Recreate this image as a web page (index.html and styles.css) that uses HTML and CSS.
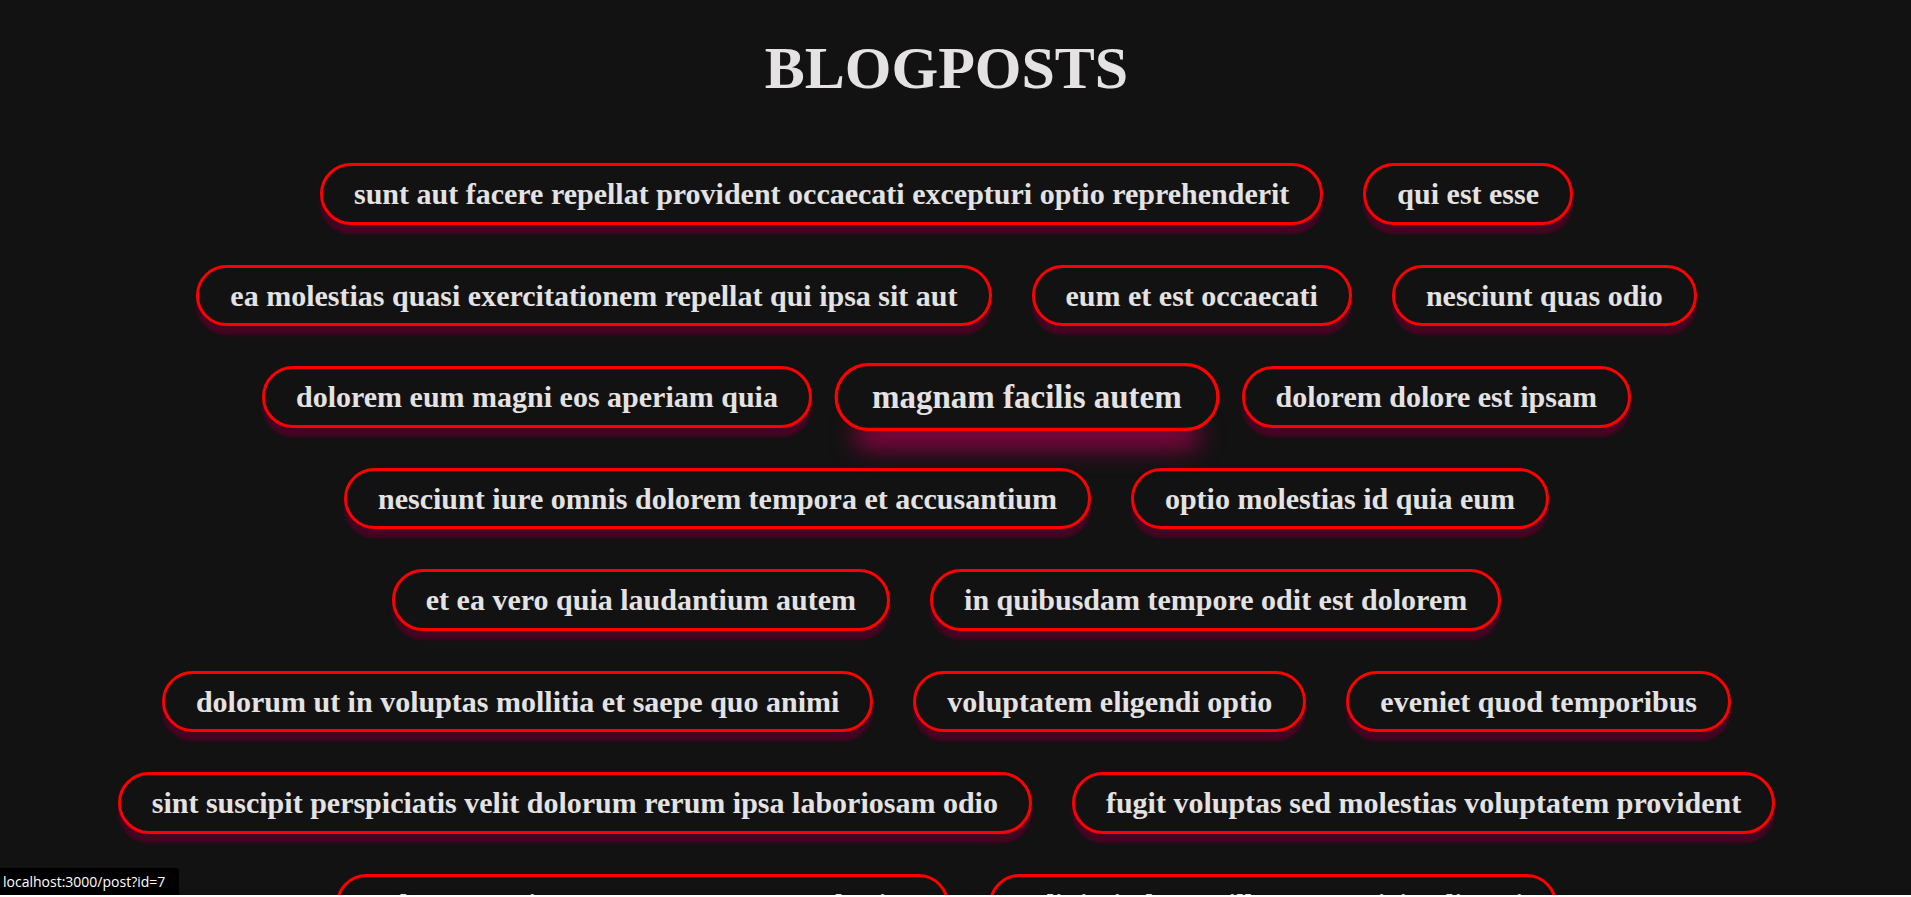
FILE: index.html
```html
<!DOCTYPE html>
<html lang="en">
<head>
<meta charset="utf-8">
<title>Blogposts</title>
<link rel="stylesheet" href="styles.css">
</head>
<body>
<main class="page">
<h1 class="title">BLOGPOSTS</h1>
<nav class="posts">
<a class="post" href="#1">sunt aut facere repellat provident occaecati excepturi optio reprehenderit</a>
<a class="post" href="#2">qui est esse</a>
<a class="post" href="#3">ea molestias quasi exercitationem repellat qui ipsa sit aut</a>
<a class="post" href="#4">eum et est occaecati</a>
<a class="post" href="#5">nesciunt quas odio</a>
<a class="post" href="#6">dolorem eum magni eos aperiam quia</a>
<a class="post post-active" href="#7">magnam facilis autem</a>
<a class="post" href="#8">dolorem dolore est ipsam</a>
<a class="post" href="#9">nesciunt iure omnis dolorem tempora et accusantium</a>
<a class="post" href="#10">optio molestias id quia eum</a>
<a class="post" href="#11">et ea vero quia laudantium autem</a>
<a class="post" href="#12">in quibusdam tempore odit est dolorem</a>
<a class="post" href="#13">dolorum ut in voluptas mollitia et saepe quo animi</a>
<a class="post" href="#14">voluptatem eligendi optio</a>
<a class="post" href="#15">eveniet quod temporibus</a>
<a class="post" href="#16">sint suscipit perspiciatis velit dolorum rerum ipsa laboriosam odio</a>
<a class="post" href="#17">fugit voluptas sed molestias voluptatem provident</a>
<a class="post" href="#18">voluptate et itaque vero tempora molestiae</a>
<a class="post" href="#19">adipisci placeat illum aut reiciendis qui</a>
</nav>
</main>
<div class="status">localhost:3000/post?id=7</div>
</body>
</html>
```
FILE: styles.css
```css
* {
  box-sizing: border-box;
}

body {
  margin: 0;
  height: 100vh;
  overflow: hidden;
  display: flex;
  flex-direction: column;
  background: #121212;
  color: #e4e2e2;
  font-family: "Liberation Serif", "Times New Roman", serif;
  border-bottom: 2px solid #fff;
}

.page {
  flex: 1;
  min-height: 0;
  overflow: hidden;
  padding: 33px 108px 0 90px;
}

.title {
  margin: 0 0 60px;
  font-size: 60px;
  line-height: 70px;
  text-align: center;
}

.posts {
  display: flex;
  flex-wrap: wrap;
  justify-content: center;
  gap: 40px;
}

.post {
  padding: 11px 31px 10px;
  border: 3px solid #f00;
  border-radius: 32px;
  background: #121212;
  box-shadow: 0 9px 3px #440522;
  color: inherit;
  font-size: 30px;
  font-weight: bold;
  line-height: 1.15;
  text-decoration: none;
  white-space: nowrap;
}

.post-active {
  transform: scale(1.1);
  box-shadow: 0 34px 22px -18px #8a0443;
}

.status {
  position: fixed;
  left: 0;
  bottom: 2px;
  padding: 4px 14px 3px 3px;
  border-top-right-radius: 4px;
  background: #000;
  color: #fff;
  font: 14px/20px "Open Sans", sans-serif;
}
```
